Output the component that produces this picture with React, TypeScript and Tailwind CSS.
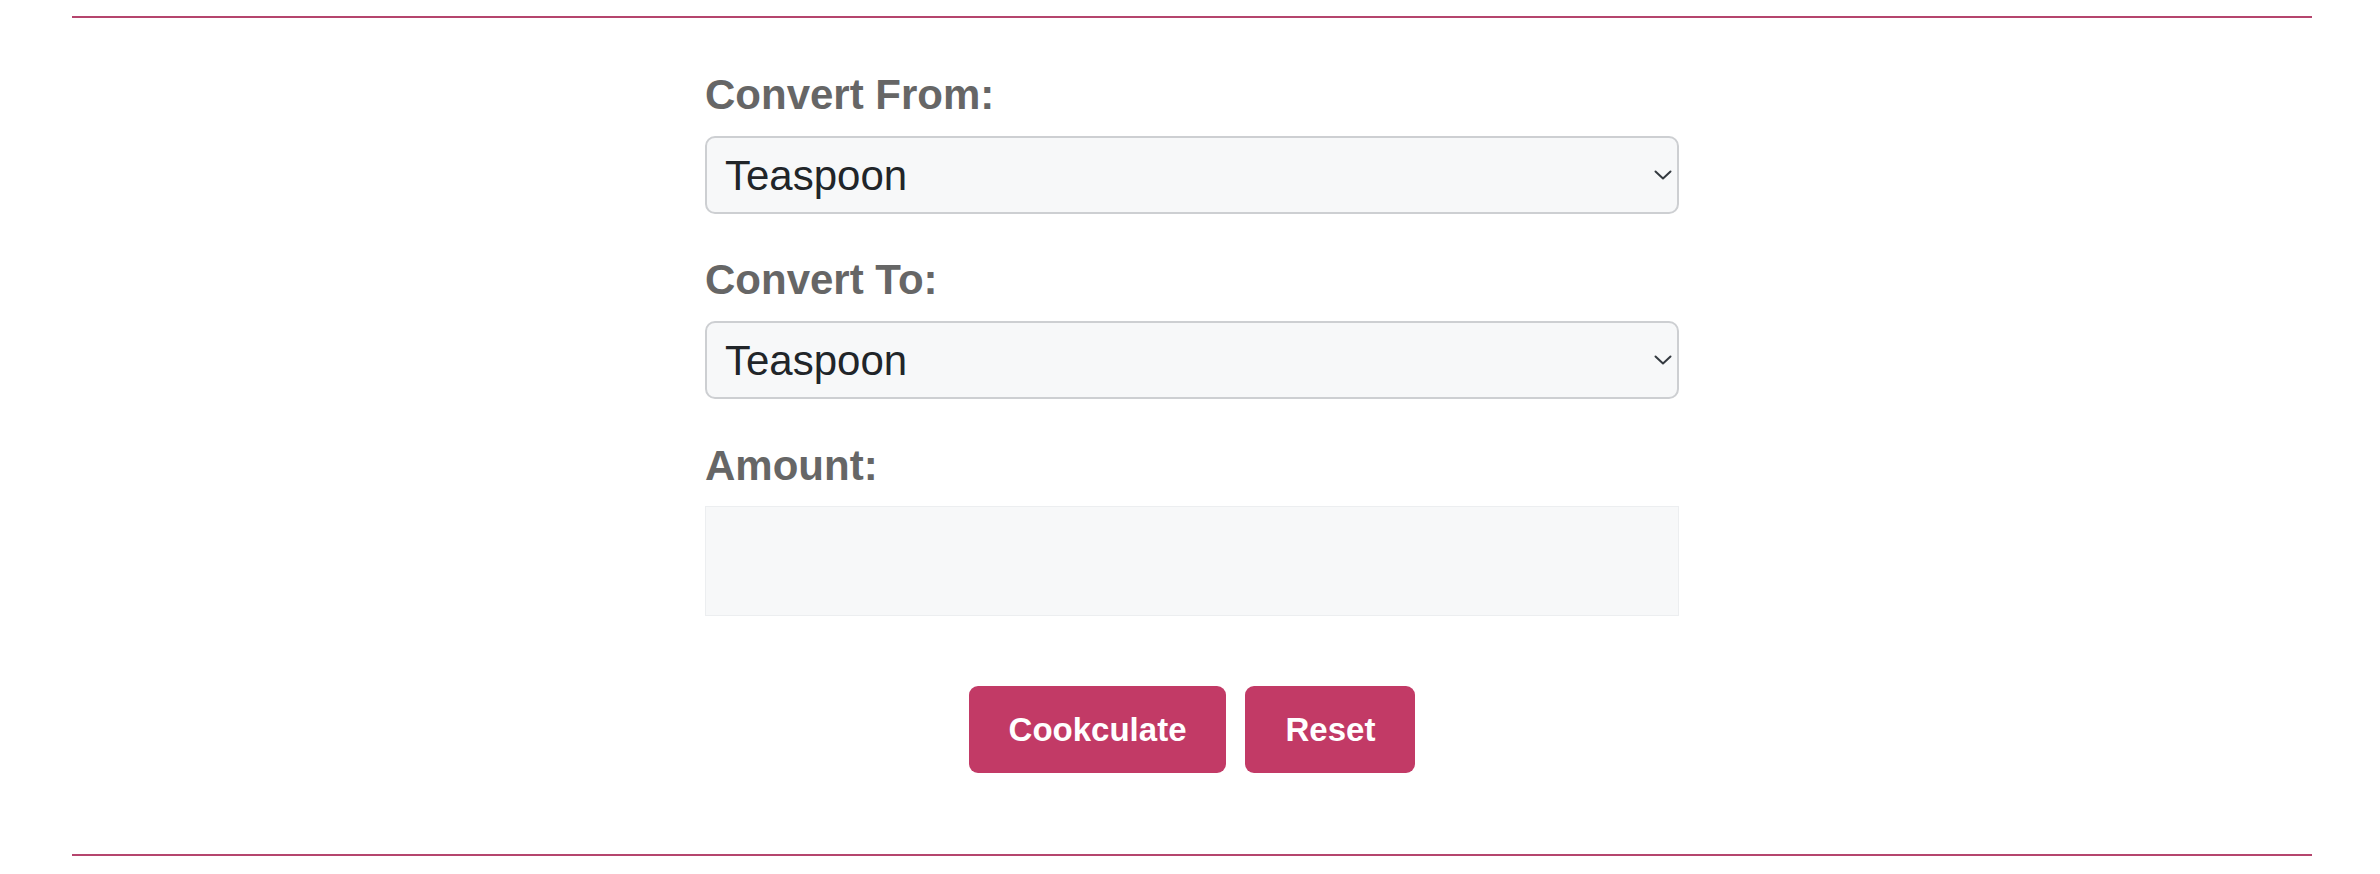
import React, { useState } from "react";

const units = ["Teaspoon", "Tablespoon", "Cup", "Ounce", "Pint", "Quart", "Gallon", "Milliliter", "Liter"];

const Chevron = () => (
  <svg
    className="pointer-events-none absolute right-[7px] top-1/2 -translate-y-1/2"
    width="18"
    height="10"
    viewBox="0 0 18 10"
    fill="none"
  >
    <path d="M1.5 1.5 L9 8.5 L16.5 1.5" stroke="#343a40" strokeWidth="2" strokeLinecap="round" strokeLinejoin="round" />
  </svg>
);

const UnitSelect = ({ value, onChange }: { value: string; onChange: (v: string) => void }) => (
  <div className="relative mt-[17px]">
    <select
      value={value}
      onChange={(e) => onChange(e.target.value)}
      className="block h-[78px] w-full appearance-none rounded-[10px] border-2 border-[#cdcfd2] bg-[#f7f8f9] pl-[18px] pr-10 text-[42px] text-[#212529] outline-none"
    >
      {units.map((u) => (
        <option key={u} value={u}>
          {u}
        </option>
      ))}
    </select>
    <Chevron />
  </div>
);

const App = () => {
  const [from, setFrom] = useState("Teaspoon");
  const [to, setTo] = useState("Teaspoon");
  const [amount, setAmount] = useState("");

  return (
    <div className="min-h-screen bg-white font-['Liberation_Sans',Arial,sans-serif]">
      <div className="ml-[72px] w-[2240px] pt-4">
        <hr className="h-[2px] border-0 bg-[#b5456d]" />

        <form className="mx-auto w-[974px] pt-[53px]" onSubmit={(e) => e.preventDefault()}>
          <label className="block text-[42px] font-bold leading-[48px] text-[#666666]">Convert From:</label>
          <UnitSelect value={from} onChange={setFrom} />

          <label className="mt-[42px] block text-[42px] font-bold leading-[48px] text-[#666666]">Convert To:</label>
          <UnitSelect value={to} onChange={setTo} />

          <label className="mt-[43px] block text-[42px] font-bold leading-[48px] text-[#666666]">Amount:</label>
          <input
            type="text"
            value={amount}
            onChange={(e) => setAmount(e.target.value)}
            className="mt-4 block h-[110px] w-full border border-[#eceef0] bg-[#f7f8f9] px-[18px] text-[42px] text-[#212529] outline-none"
          />

          <div className="mt-[70px] flex justify-center gap-[19px]">
            <button
              type="submit"
              className="h-[87px] rounded-[9px] bg-[#c23a66] px-[40px] text-[33px] font-bold text-white"
            >
              Cookculate
            </button>
            <button
              type="button"
              onClick={() => {
                setFrom("Teaspoon");
                setTo("Teaspoon");
                setAmount("");
              }}
              className="h-[87px] rounded-[9px] bg-[#c23a66] px-[40px] text-[33px] font-bold text-white"
            >
              Reset
            </button>
          </div>
        </form>

        <hr className="mt-[81px] h-[2px] border-0 bg-[#b5456d]" />
      </div>
    </div>
  );
};

export default App;
